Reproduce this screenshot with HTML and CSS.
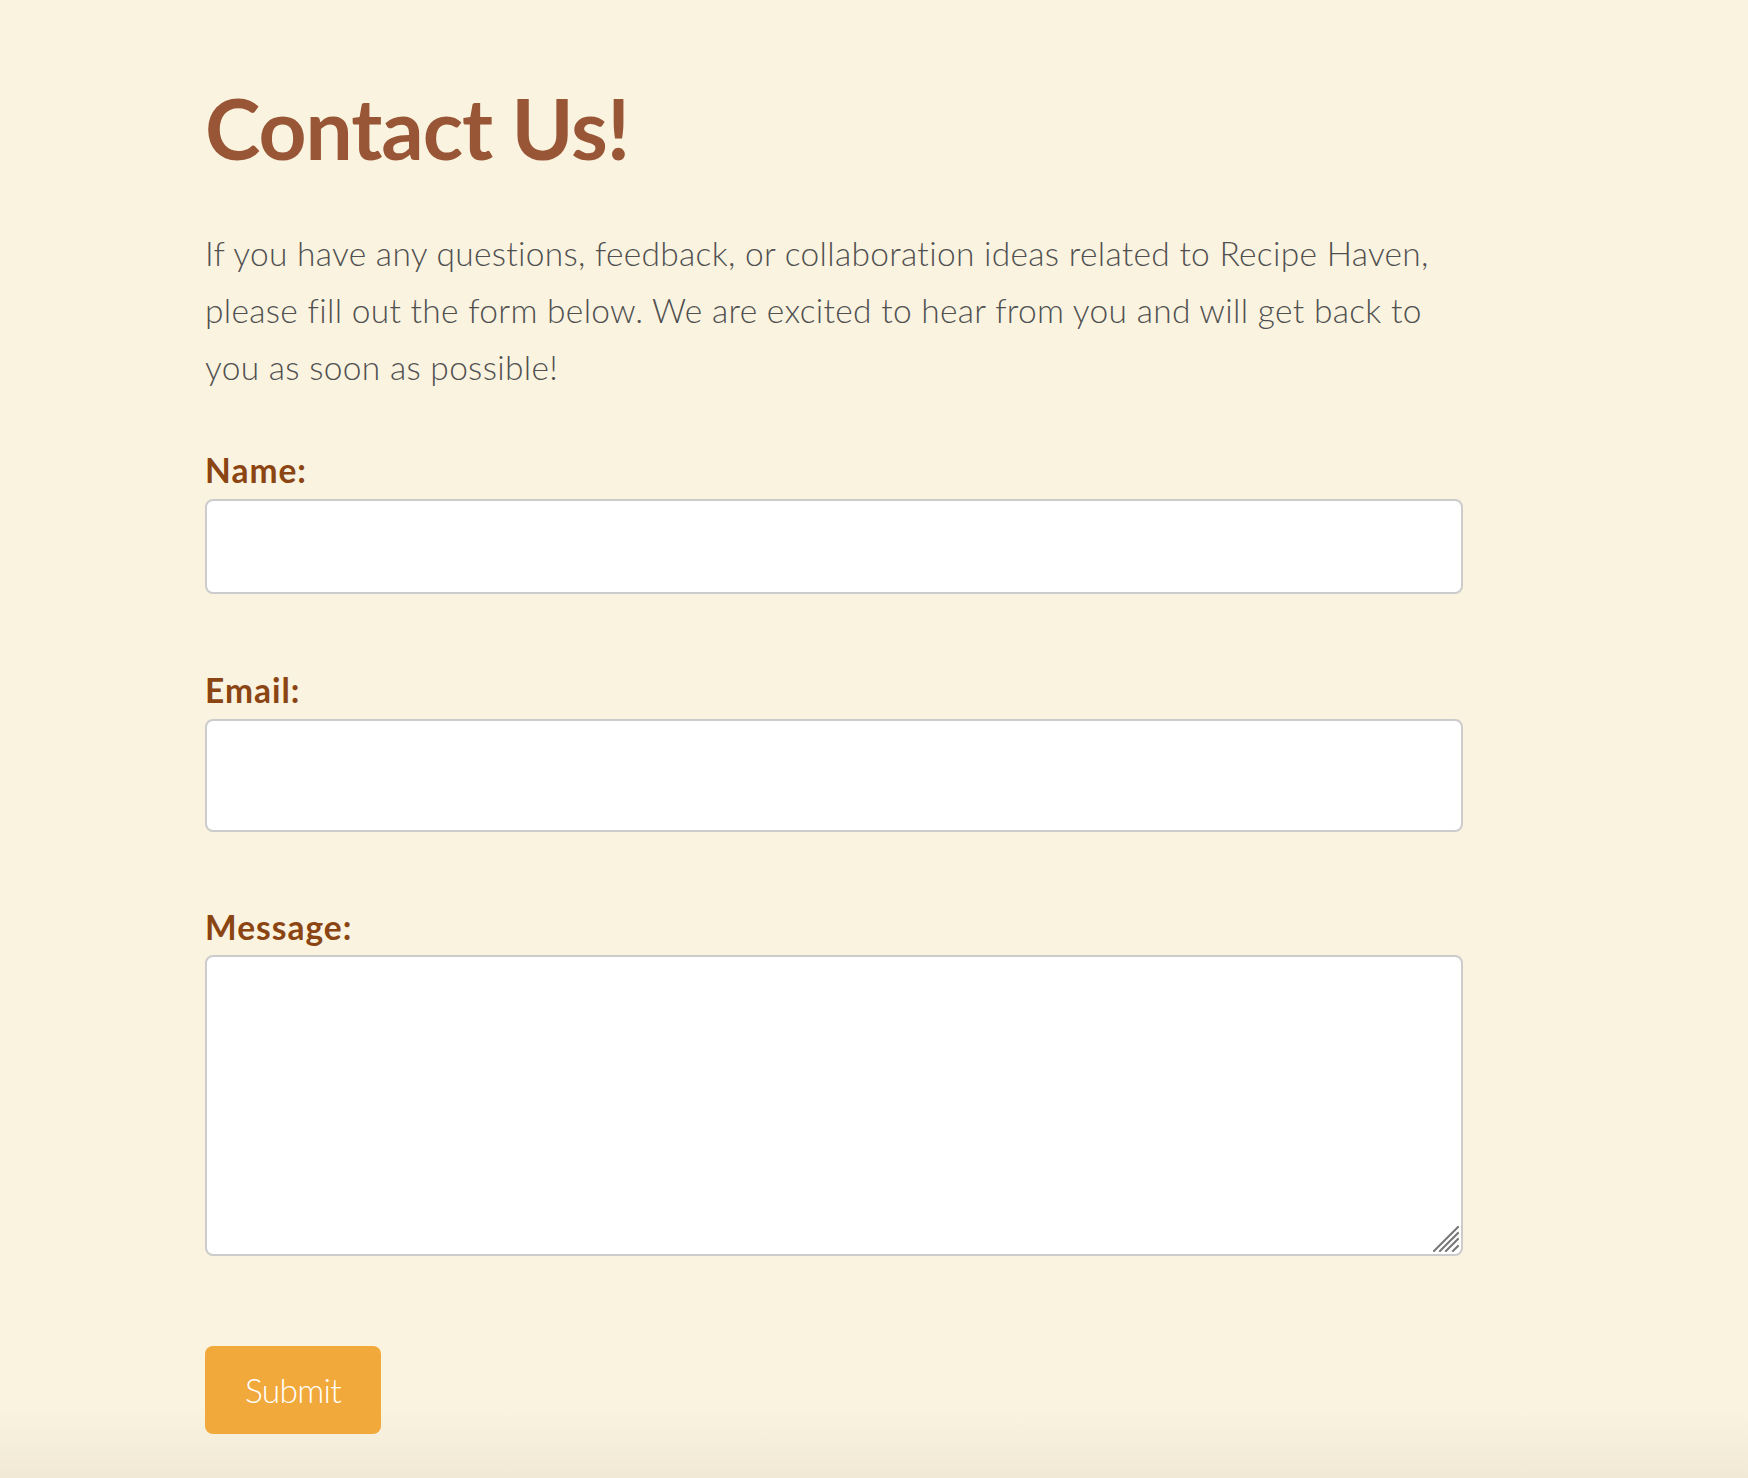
FILE: index.html
```html
<!DOCTYPE html>
<html lang="en">
<head>
<meta charset="utf-8">
<title>Contact Us - Recipe Haven</title>
<link rel="stylesheet" href="styles.css">
</head>
<body>
<main class="contact">
  <h1 class="contact-title">Contact Us!</h1>
  <p class="contact-intro">If you have any questions, feedback, or collaboration ideas related to Recipe Haven, please fill out the form below. We are excited to hear from you and will get back to you as soon as possible!</p>
  <form class="contact-form">
    <div class="field field-name">
      <label class="field-label" for="name">Name:</label>
      <input class="field-input input-name" type="text" id="name" name="name">
    </div>
    <div class="field field-email">
      <label class="field-label" for="email">Email:</label>
      <input class="field-input input-email" type="email" id="email" name="email">
    </div>
    <div class="field field-message">
      <label class="field-label" for="message">Message:</label>
      <textarea class="field-input input-message" id="message" name="message"></textarea>
      <svg class="resize-grip" width="26" height="26" viewBox="0 0 26 26" aria-hidden="true">
        <g stroke="#767676" stroke-width="2" stroke-linecap="square">
          <line x1="1" y1="25" x2="25" y2="1"/>
          <line x1="7" y1="25" x2="25" y2="7"/>
          <line x1="13" y1="25" x2="25" y2="13"/>
          <line x1="20" y1="25" x2="25" y2="20"/>
        </g>
      </svg>
    </div>
    <button class="submit-btn" type="submit">Submit</button>
  </form>
</main>
</body>
</html>
```

FILE: styles.css
```css
html {
  min-height: 100%;
  background: linear-gradient(to bottom, #faf3e0 0, #faf3e0 calc(100% - 70px), #f1e9d5 100%);
}

body {
  margin: 0;
  font-family: Lato, "Open Sans", sans-serif;
  font-size: 33.5px;
  color: #555555;
}

.contact {
  width: 1258px;
  padding: 78px 0 0 205px;
}

.contact-title {
  margin: 0;
  font-size: 83.7px;
  font-weight: 700;
  line-height: 1.2;
  letter-spacing: -1px;
  color: #985636;
}

.contact-intro {
  margin: 47px 0 0;
  font-weight: 300;
  line-height: 57px;
  letter-spacing: 0.3px;
  color: #505050;
  padding-right: 10px;
}

.contact-form {
  display: flex;
  flex-direction: column;
  align-items: flex-start;
  margin-top: 54px;
}

.field {
  position: relative;
  display: flex;
  flex-direction: column;
  width: 100%;
}

.field-email {
  margin-top: 76px;
}

.field-message {
  margin-top: 75px;
}

.field-label {
  font-weight: 700;
  line-height: 1.2;
  letter-spacing: 1px;
  color: #8b4513;
  margin-bottom: 8px;
}

.field-email .field-label {
  margin-bottom: 9px;
}

.field-message .field-label {
  margin-bottom: 8px;
}

.field-input {
  box-sizing: border-box;
  width: 100%;
  margin: 0;
  border: 2px solid #cccccc;
  border-radius: 8px;
  background: #ffffff;
  font-family: Lato, sans-serif;
  font-size: 33.5px;
  padding: 10px 16px;
  outline: none;
}

.input-name {
  height: 95px;
}

.input-email {
  height: 113px;
}

.input-message {
  display: block;
  height: 301px;
  resize: none;
}

.resize-grip {
  position: absolute;
  right: 4px;
  bottom: 4px;
  pointer-events: none;
}

.submit-btn {
  margin-top: 90px;
  height: 88px;
  padding: 0 40px;
  border: none;
  border-radius: 8px;
  background: #f2a93b;
  color: #ffffff;
  font-family: Lato, sans-serif;
  font-size: 33.5px;
  font-weight: 300;
  line-height: 1.2;
  letter-spacing: -0.7px;
  cursor: pointer;
}
```
